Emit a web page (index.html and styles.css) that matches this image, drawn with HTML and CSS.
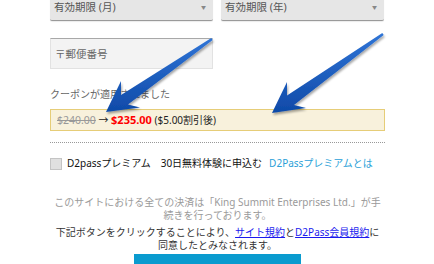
FILE: index.html
```html
<!DOCTYPE html>
<html lang="ja">
<head>
<meta charset="utf-8">
<link rel="stylesheet" href="styles.css">
</head>
<body>
<div class="page">
  <div class="selects">
    <div class="select"><span>有効期限 (月)</span><span class="caret">▼</span></div>
    <div class="select"><span>有効期限 (年)</span><span class="caret">▼</span></div>
  </div>
  <div class="zip">〒郵便番号</div>
  <div class="coupon-label">クーポンが適用されました</div>
  <div class="coupon-box"><span class="old">$240.00</span> → <span class="new">$235.00</span> ($5.00割引後)</div>
  <div class="divider"></div>
  <label class="premium"><span class="check"></span><span>D2passプレミアム　30日無料体験に申込む</span><a class="premium-link" href="#">D2Passプレミアムとは</a></label>
  <p class="note">このサイトにおける全ての決済は「King Summit Enterprises Ltd.」が手<br>続きを行っております。</p>
  <p class="agree">下記ボタンをクリックすることにより、<a href="#">サイト規約</a>と<a href="#">D2Pass会員規約</a>に<br>同意したとみなされます。</p>
  <div class="button"></div>
</div>
<svg class="arrows" width="434" height="264" viewBox="0 0 434 264">
  <defs>
    <linearGradient id="ag" x1="0" y1="0" x2="0" y2="1">
      <stop offset="0" stop-color="#2f74d6"/>
      <stop offset="1" stop-color="#0f4aa8"/>
    </linearGradient>
    <filter id="sh" x="-20%" y="-20%" width="140%" height="140%">
      <feDropShadow dx="1" dy="2" stdDeviation="1.2" flood-color="#000" flood-opacity="0.35"/>
    </filter>
  </defs>
  <polygon filter="url(#sh)" fill="url(#ag)" points="106,112 121,81 121,95 211.3,38 212.7,40 128,104.5 140,107.5"/>
  <polygon filter="url(#sh)" fill="url(#ag)" points="272,113 287,82 287,95.5 382.3,33 383.7,35 294,105 306,108"/>
</svg>
</body>
</html>
```

FILE: styles.css
```css
html, body {
  margin: 0;
  padding: 0;
  background: #fff;
}
body {
  font-family: "Noto Sans", "Noto Sans CJK JP", sans-serif;
  font-size: 10px;
  color: #333;
  width: 434px;
  height: 264px;
  overflow: hidden;
  position: relative;
}
.page {
  width: 335px;
  margin-left: 50px;
}
.selects {
  display: grid;
  grid-template-columns: 163px 163px;
  column-gap: 8px;
  margin-top: -7px;
}
.select {
  height: 27px;
  background: #e6e6e6;
  border-bottom: 1px solid #9a9a9a;
  border-radius: 0 0 2px 2px;
  box-shadow: 0 1px 1px rgba(0,0,0,0.08);
  display: flex;
  align-items: center;
  justify-content: space-between;
  padding: 0 7px 0 4px;
  color: #555;
  font-size: 10.5px;
}
.caret {
  font-size: 5px;
  color: #888;
}
.zip {
  margin-top: 17px;
  height: 31px;
  box-sizing: border-box;
  background: #f3f3f3;
  border-top: 1px solid #a8a8a8;
  border-left: 1px solid #e2e2e2;
  border-right: 1px solid #e2e2e2;
  border-bottom: 1px solid #e2e2e2;
  width: 163px;
  display: flex;
  align-items: center;
  padding-left: 4px;
  color: #666;
  font-size: 10.5px;
}
.coupon-label {
  margin-top: 19px;
  line-height: 13px;
  color: #666;
  font-size: 10px;
}
.coupon-box {
  margin-top: 8px;
  height: 20px;
  line-height: 20px;
  background: #f8f1dc;
  border: 1px solid #e6cd78;
  padding-left: 6px;
  color: #222;
  font-size: 10px;
}
.old {
  color: #999;
  text-decoration: line-through;
  font-size: 10.5px;
}
.new {
  color: #ff0000;
  font-weight: bold;
  font-size: 11px;
}
.divider {
  margin-top: 11px;
  border-top: 1px dotted #999;
}
.premium {
  margin-top: 14px;
  display: flex;
  align-items: center;
  line-height: 13px;
  color: #111;
  font-size: 10px;
  white-space: nowrap;
}
.check {
  width: 10px;
  height: 10px;
  background: #e0e0e0;
  border: 1px solid #c4c4c4;
  margin-right: 5px;
  flex: none;
}
.premium-link {
  margin-left: 7px;
  color: #2a9fd8;
  text-decoration: none;
}
.note {
  margin: 26px -8px 0;
  text-align: center;
  line-height: 13px;
  color: #9a9a9a;
  font-size: 10px;
  white-space: nowrap;
}
.agree {
  margin: 4px -8px 0;
  text-align: center;
  line-height: 13px;
  color: #333;
  font-size: 10px;
  white-space: nowrap;
}
.agree a {
  color: #1a1aee;
  text-decoration: underline;
}
.button {
  margin: 2px auto 0;
  width: 167px;
  height: 34px;
  background: #0a9bcf;
}
.arrows {
  position: absolute;
  left: 0;
  top: 0;
  pointer-events: none;
}
```
